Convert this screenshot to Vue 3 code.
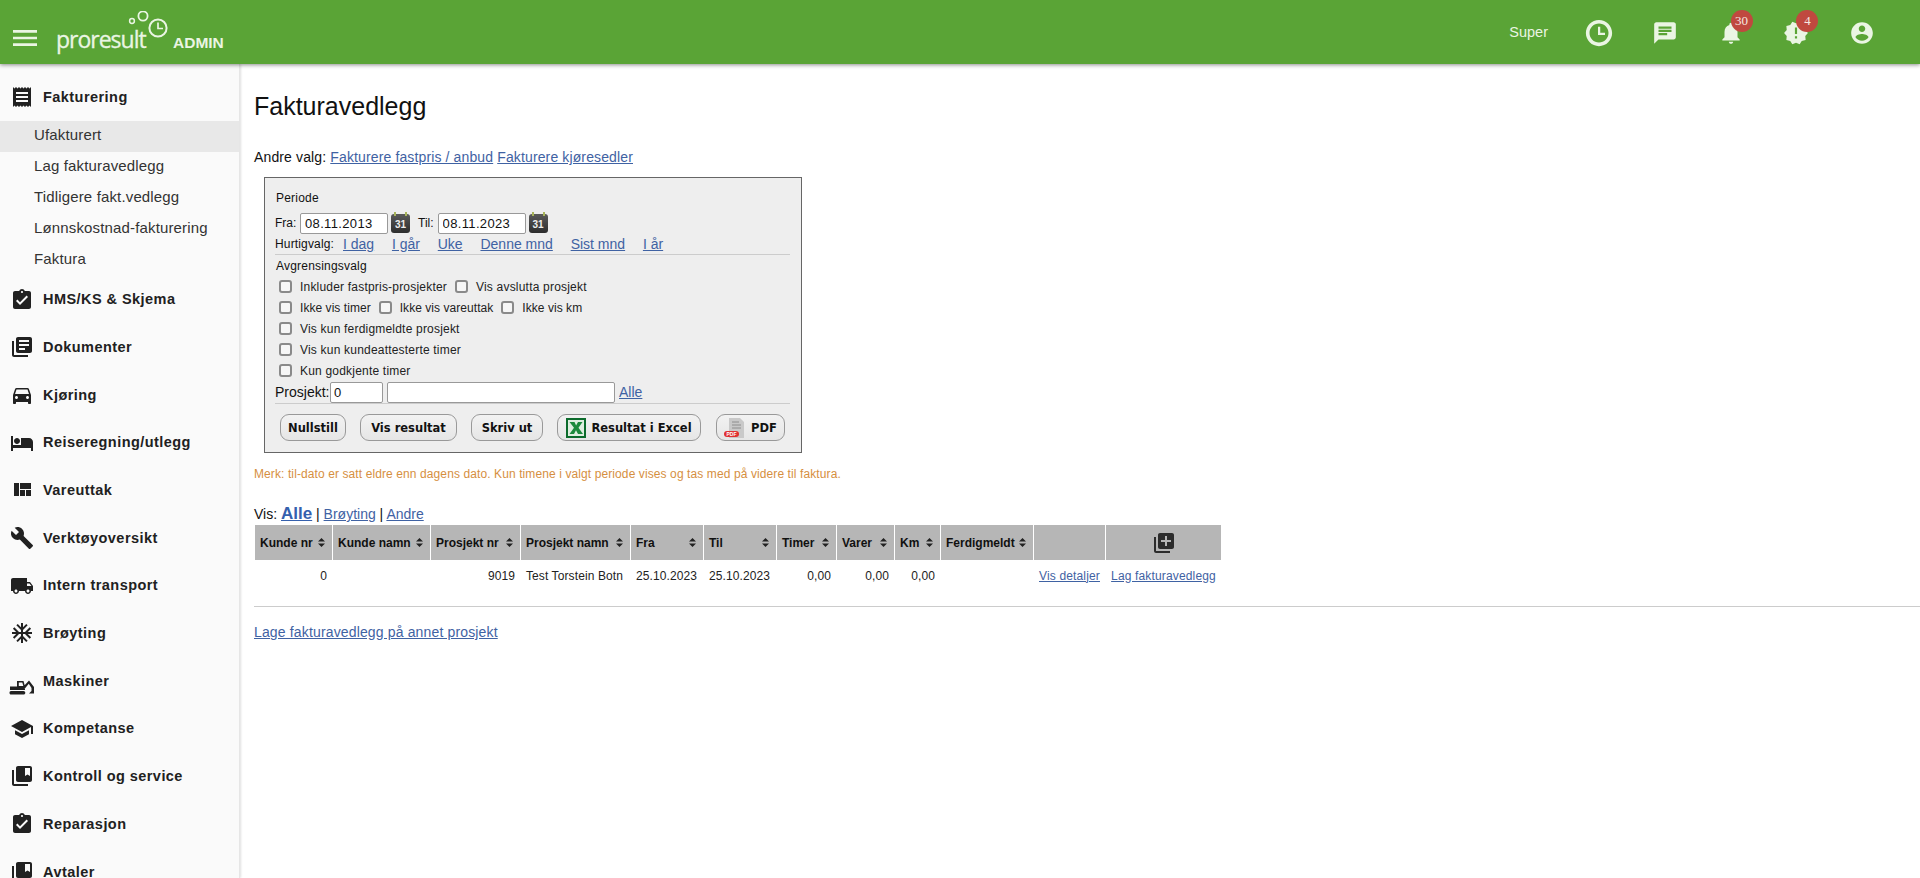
<script setup>
const P = {
  receipt: 'M18 17H6v-2h12v2zm0-4H6v-2h12v2zm0-4H6V7h12v2zM3 22l1.5-1.5L6 22l1.5-1.5L9 22l1.5-1.5L12 22l1.5-1.5L15 22l1.5-1.5L18 22l1.5-1.5L21 22V2l-1.5 1.5L18 2l-1.5 1.5L15 2l-1.5 1.5L12 2l-1.5 1.5L9 2 7.5 3.5 6 2 4.5 3.5 3 2v20z',
  turned: 'M19 3h-4.18C14.4 1.84 13.3 1 12 1c-1.3 0-2.4.84-2.82 2H5c-1.1 0-2 .9-2 2v14c0 1.1.9 2 2 2h14c1.1 0 2-.9 2-2V5c0-1.1-.9-2-2-2zm-7 0c.55 0 1 .45 1 1s-.45 1-1 1-1-.45-1-1 .45-1 1-1zm-2 14l-4-4 1.41-1.41L10 14.17l6.59-6.59L18 9l-8 8z',
  books: 'M4 6H2v14c0 1.1.9 2 2 2h14v-2H4V6zm16-4H8c-1.1 0-2 .9-2 2v12c0 1.1.9 2 2 2h12c1.1 0 2-.9 2-2V4c0-1.1-.9-2-2-2zm-1 9H9V9h10v2zm-4 4H9v-2h6v2zm4-8H9V5h10v2z',
  car: 'M18.92 6.01C18.72 5.42 18.16 5 17.5 5h-11c-.66 0-1.21.42-1.42 1.01L3 12v8c0 .55.45 1 1 1h1c.55 0 1-.45 1-1v-1h12v1c0 .55.45 1 1 1h1c.55 0 1-.45 1-1v-8l-2.08-5.99zM6.5 16c-.83 0-1.5-.67-1.5-1.5S5.67 13 6.5 13s1.5.67 1.5 1.5S7.33 16 6.5 16zm11 0c-.83 0-1.5-.67-1.5-1.5s.67-1.5 1.5-1.5 1.5.67 1.5 1.5-.67 1.5-1.5 1.5zM5 11l1.5-4.5h11L19 11H5z',
  hotel: 'M7 13c1.66 0 3-1.34 3-3S8.66 7 7 7s-3 1.34-3 3 1.34 3 3 3zm12-6h-8v7H3V5H1v15h2v-3h18v3h2v-9c0-2.21-1.79-4-4-4z',
  quilt: 'M10 18h5v-6h-5v6zm-6 0h5V5H4v13zm12 0h5v-6h-5v6zM10 5v6h11V5H10z',
  build: 'M22.7 19l-9.1-9.1c.9-2.3.4-5-1.5-6.9-2-2-5-2.4-7.4-1.3L9 6 6 9 1.6 4.7C.4 7.1.9 10.1 2.9 12.1c1.9 1.9 4.6 2.4 6.9 1.5l9.1 9.1c.4.4 1 .4 1.4 0l2.3-2.3c.5-.4.5-1.1.1-1.4z',
  truck: 'M20 8h-3V4H3c-1.1 0-2 .9-2 2v11h2c0 1.66 1.34 3 3 3s3-1.34 3-3h6c0 1.66 1.34 3 3 3s3-1.34 3-3h2v-5l-3-4zM6 18.5c-.83 0-1.5-.67-1.5-1.5s.67-1.5 1.5-1.5 1.5.67 1.5 1.5-.67 1.5-1.5 1.5zm13.5-9l1.96 2.5H17V9.5h2.5zm-1.5 9c-.83 0-1.5-.67-1.5-1.5s.67-1.5 1.5-1.5 1.5.67 1.5 1.5-.67 1.5-1.5 1.5z',
  snow: 'M22 11h-4.17l3.24-3.24-1.41-1.42L15 11h-2V9l4.66-4.66-1.42-1.41L13 6.17V2h-2v4.17L7.76 2.93 6.34 4.34 11 9v2H9L4.34 6.34 2.93 7.76 6.17 11H2v2h4.17l-3.24 3.24 1.41 1.42L9 13h2v2l-4.66 4.66 1.42 1.41L11 17.83V22h2v-4.17l3.24 3.24 1.42-1.41L13 15v-2h2l4.66 4.66 1.41-1.42L17.83 13H22z',
  digger: 'M1 22h12.5c1 0 1.8.8 1.8 1.8s-.8 1.8-1.8 1.8H1c-1 0-1.5-.8-1.5-1.8S0 22 1 22zM0 17.5h7V12h6.5l1.5 5.5V21H0zM8.8 13.5V17h4.5l-1-3.5zM13 18l6-6.5 5 6.5v6.5h-5l2.5-2.5v-3l-2.7-4.3-4.3 5.3z',
  school: 'M5 13.18v4L12 21l7-3.82v-4L12 17l-7-3.82zM12 3L1 9l11 6 9-4.91V17h2V9L12 3z',
  bookmark: 'M4 6H2v14c0 1.1.9 2 2 2h14v-2H4V6zm16-4H8c-1.1 0-2 .9-2 2v12c0 1.1.9 2 2 2h12c1.1 0 2-.9 2-2V4c0-1.1-.9-2-2-2zm0 10l-2.5-1.5L15 12V4h5v8z',
  add: 'M4 6H2v14c0 1.1.9 2 2 2h14v-2H4V6zm16-4H8c-1.1 0-2 .9-2 2v12c0 1.1.9 2 2 2h12c1.1 0 2-.9 2-2V4c0-1.1-.9-2-2-2zm-1 9h-4v4h-2v-4H9V9h4V5h2v4h4v2z',
  menu: 'M3 18h18v-2H3v2zm0-5h18v-2H3v2zm0-7v2h18V6H3z',
  clock: 'M11.99 1.5C6.2 1.5 1.5 6.2 1.5 12s4.7 10.5 10.49 10.5C17.79 22.5 22.5 17.8 22.5 12S17.79 1.5 11.99 1.5zM12 19.6c-4.2 0-7.6-3.4-7.6-7.6S7.8 4.4 12 4.4s7.6 3.4 7.6 7.6-3.4 7.6-7.6 7.6zM13 7h-1.8v6.6h5.6v-1.8H13z',
  chat: 'M20 2H4c-1.1 0-1.99.9-1.99 2L2 22l4-4h14c1.1 0 2-.9 2-2V4c0-1.1-.9-2-2-2zM6 9h12v2H6V9zm8 5H6v-2h8v2zm4-6H6V6h12v2z',
  bell: 'M12 22c1.1 0 2-.9 2-2h-4c0 1.1.89 2 2 2zm6-6v-5c0-3.07-1.64-5.64-4.5-6.32V4c0-.83-.67-1.5-1.5-1.5s-1.5.67-1.5 1.5v.68C7.63 5.36 6 7.92 6 11v5l-2 2v1h16v-1l-2-2z',
  release: 'M23 12l-2.44-2.78.34-3.68-3.61-.82-1.89-3.18L12 3 8.6 1.54 6.71 4.72l-3.61.81.34 3.68L1 12l2.44 2.78-.34 3.69 3.61.82 1.89 3.18L12 21l3.4 1.46 1.89-3.18 3.61-.82-.34-3.68L23 12zm-10 5h-2v-2h2v2zm0-4h-2V7h2v6z',
  account: 'M12 2C6.48 2 2 6.48 2 12s4.48 10 10 10 10-4.48 10-10S17.52 2 12 2zm0 3c1.66 0 3 1.34 3 3s-1.34 3-3 3-3-1.34-3-3 1.34-3 3-3zm0 14.2c-2.5 0-4.71-1.28-6-3.22.03-1.99 4-3.08 6-3.08 1.99 0 5.97 1.09 6 3.08-1.29 1.94-3.5 3.22-6 3.22z'
}
const subs = ['Ufakturert', 'Lag fakturavedlegg', 'Tidligere fakt.vedlegg', 'Lønnskostnad-fakturering', 'Faktura']
const nav = [
  ['HMS/KS & Skjema', P.turned], ['Dokumenter', P.books], ['Kjøring', P.car], ['Reiseregning/utlegg', P.hotel],
  ['Vareuttak', P.quilt], ['Verktøyoversikt', P.build], ['Intern transport', P.truck], ['Brøyting', P.snow],
  ['Maskiner', P.digger], ['Kompetanse', P.school], ['Kontroll og service', P.bookmark], ['Reparasjon', P.turned], ['Avtaler', P.bookmark]
]
const topIcons = [
  { d: P.clock, size: 30 }, { d: P.chat, size: 26 }, { d: P.bell, size: 26, badge: '30' }, { d: P.release, size: 26, badge: '4' }, { d: P.account, size: 26 }
]
const quick = ['I dag', 'I går', 'Uke', 'Denne mnd', 'Sist mnd', 'I år']
const checkRows = [
  ['Inkluder fastpris-prosjekter', 'Vis avslutta prosjekt'],
  ['Ikke vis timer', 'Ikke vis vareuttak', 'Ikke vis km'],
  ['Vis kun ferdigmeldte prosjekt'],
  ['Vis kun kundeattesterte timer'],
  ['Kun godkjente timer']
]
const cols = [
  { t: 'Kunde nr', w: 77 }, { t: 'Kunde namn', w: 97 }, { t: 'Prosjekt nr', w: 89 }, { t: 'Prosjekt namn', w: 109 },
  { t: 'Fra', w: 72 }, { t: 'Til', w: 72 }, { t: 'Timer', w: 59 }, { t: 'Varer', w: 57 }, { t: 'Km', w: 45 }, { t: 'Ferdigmeldt', w: 92 }
]
</script>

<template>
  <div class="page">
    <header class="top">
      <svg class="burger" viewBox="0 0 24 24"><path :d="P.menu" /></svg>
      <div class="logo">
        <span class="logo-word">proresult</span>
        <svg class="logo-marks" viewBox="0 0 50 34" fill="none" stroke="currentColor">
          <circle cx="5" cy="10" r="2.4" stroke-width="1.5" />
          <circle cx="16" cy="5" r="4.6" stroke-width="1.8" />
          <circle cx="31" cy="17" r="8.6" stroke-width="2" />
          <path d="M31 11.5V17.5H36" stroke-width="1.7" />
        </svg>
      </div>
      <span class="admin">ADMIN</span>
      <span class="super">Super</span>
      <div v-for="(ic, i) in topIcons" :key="i" class="top-item">
        <svg :width="ic.size" :height="ic.size" viewBox="0 0 24 24"><path :d="ic.d" /></svg>
        <span v-if="ic.badge" class="badge">{{ ic.badge }}</span>
      </div>
    </header>

    <div class="body">
      <aside class="side">
        <div class="head">
          <svg class="nav-ic" viewBox="0 0 24 24"><path :d="P.receipt" /></svg>
          <span>Fakturering</span>
        </div>
        <div v-for="(s, i) in subs" :key="s" class="sub" :class="{ active: i === 0 }">{{ s }}</div>
        <div v-for="n in nav" :key="n[0]" class="head">
          <svg class="nav-ic" viewBox="0 0 24 24"><path :d="n[1]" /></svg>
          <span>{{ n[0] }}</span>
        </div>
      </aside>

      <main class="main">
        <h1 class="title">Fakturavedlegg</h1>
        <p class="choices">Andre valg: <a href="#">Fakturere fastpris / anbud</a> <a href="#">Fakturere kjøresedler</a></p>

        <section class="panel">
          <div class="legend">Periode</div>
          <div class="dates">
            <label>Fra:</label>
            <input class="date" value="08.11.2013" />
            <span class="cal"><i></i><i></i>31</span>
            <label class="til">Til:</label>
            <input class="date" value="08.11.2023" />
            <span class="cal"><i></i><i></i>31</span>
          </div>
          <div class="quick">
            <span class="quick-label">Hurtigvalg:</span>
            <a v-for="q in quick" :key="q" href="#">{{ q }}</a>
          </div>
          <div class="legend legend2">Avgrensingsvalg</div>
          <div v-for="(r, i) in checkRows" :key="i" class="checks" :class="{ tight: i === 1 }">
            <label v-for="c in r" :key="c" class="check"><span class="box"></span>{{ c }}</label>
          </div>
          <div class="proj">
            <span class="proj-label">Prosjekt:</span>
            <input class="proj-nr" value="0" />
            <input class="proj-name" />
            <a href="#">Alle</a>
          </div>
          <div class="btns">
            <button class="b1">Nullstill</button>
            <button class="b2">Vis resultat</button>
            <button class="b3">Skriv ut</button>
            <button class="b4">
              <svg width="20" height="20" viewBox="0 0 20 20"><rect width="20" height="20" fill="#0c6b2c" /><rect x="2" y="2" width="16" height="16" fill="#dfeee0" /><path d="M3.5 4h5l1.6 3.4L12 4h4.5l-4 5.8 4.5 6.2h-5l-2-3.8-2 3.8H3.5L8 9.8z" fill="#1c8a3c" /></svg>
              Resultat i Excel
            </button>
            <button class="b5">
              <svg width="22" height="22" viewBox="0 0 22 22"><path d="M5 1h11l4 4v16H5z" fill="#c9c9c9" /><path d="M8 5h7M8 8h9M8 11h9" stroke="#8e8e8e" /><rect x="0" y="14" width="15" height="6" rx="3" fill="#e03030" /><text x="7.5" y="19" text-anchor="middle" font-size="5" font-weight="700" fill="#fff" font-family="Liberation Sans">PDF</text></svg>
              PDF
            </button>
          </div>
        </section>

        <p class="note">Merk: til-dato er satt eldre enn dagens dato. Kun timene i valgt periode vises og tas med på videre til faktura.</p>
        <p class="vis">Vis: <a href="#" class="big">Alle</a> | <a href="#">Brøyting</a> | <a href="#">Andre</a></p>

        <table class="grid">
          <colgroup>
            <col v-for="c in cols" :key="c.t" :style="{ width: c.w + 'px' }" />
            <col class="c-blank" /><col class="c-last" />
          </colgroup>
          <thead>
            <tr>
              <th v-for="c in cols" :key="c.t">
                <div class="th-in">
                  <span>{{ c.t }}</span>
                  <svg width="7" height="9" viewBox="0 0 7 9"><path d="M3.5 0L7 3.6H0zM3.5 9L0 5.4H7z" fill="#222" /></svg>
                </div>
              </th>
              <th></th>
              <th class="th-add"><svg width="24" height="24" viewBox="0 0 24 24"><path :d="P.add" fill="#2c2c2c" /></svg></th>
            </tr>
          </thead>
          <tbody>
            <tr>
              <td class="r">0</td><td></td><td class="r">9019</td><td>Test Torstein Botn</td>
              <td>25.10.2023</td><td>25.10.2023</td><td class="r">0,00</td><td class="r">0,00</td><td class="r">0,00</td><td></td>
              <td class="link-cell"><a href="#">Vis detaljer</a></td>
              <td class="link-cell"><a href="#">Lag fakturavedlegg</a></td>
            </tr>
          </tbody>
        </table>
        <hr class="rule" />
        <p class="other"><a href="#">Lage fakturavedlegg på annet prosjekt</a></p>
      </main>
    </div>
  </div>
</template>

<style>
html, body { margin: 0; height: 100%; overflow: hidden; background: #fff; }
</style>

<style scoped>
.page { width: 1920px; height: 878px; overflow: hidden; font-family: "Liberation Sans", Arial, sans-serif; color: #111; display: flex; flex-direction: column; }
a { color: #3f62a3; text-decoration: underline; }
p { margin: 0; }

.top { flex: none; height: 64px; background: #5aa436; box-shadow: 0 1px 4px rgba(0,0,0,.45); display: flex; align-items: center; position: relative; z-index: 2; color: #eaf5e3; padding-right: 25px; box-sizing: border-box; }
.burger { width: 32px; height: 32px; margin-left: 9px; fill: #eaf5e3; margin-top: 12px; }
.logo { position: relative; margin-left: 15px; width: 118px; height: 64px; }
.logo-word { position: absolute; left: 0; top: 23px; font-family: "Open Sans", sans-serif; font-size: 23px; line-height: 32px; letter-spacing: -1px; -webkit-text-stroke: .3px #eaf5e3; }
.logo-marks { position: absolute; left: 71px; top: 11px; width: 50px; height: 34px; }
.admin { font-weight: 700; font-size: 15.5px; margin-top: 22px; margin-left: -1px; }
.super { margin-left: auto; margin-right: 18px; font-size: 14.5px; margin-top: -1px; }
.top-item { width: 65.8px; height: 64px; display: flex; align-items: center; justify-content: center; position: relative; }
.top-item svg { fill: #eaf5e3; margin-top: 2px; }
.badge { position: absolute; left: 33px; top: 10px; min-width: 22px; height: 22px; border-radius: 11px; background: #c0493f; color: #f5e8e0; font-size: 13px; line-height: 22px; text-align: center; font-family: "Liberation Serif", serif; }

.body { flex: 1; display: flex; min-height: 0; }
.side { flex: none; width: 240px; box-sizing: border-box; background: #fafafa; border-right: 1px solid #e6e6e6; box-shadow: 1px 0 2px rgba(0,0,0,.12); padding-top: 9px; overflow: hidden; }
.head { height: 47.7px; display: flex; align-items: center; font-weight: 700; font-size: 14.5px; letter-spacing: .45px; color: #212121; }
.head span { padding-bottom: .5px; }
.nav-ic { width: 24px; height: 24px; margin-left: 10px; margin-right: 9px; fill: #212121; flex: none; overflow: visible; }
.sub { height: 31px; line-height: 28px; padding-left: 34px; font-size: 15px; letter-spacing: .15px; color: #333; }
.sub.active { background: #e8e8e8; }

.main { flex: 1; padding: 24px 0 0 14px; min-width: 0; }
.title { margin: 0; font-weight: 400; font-size: 25px; line-height: 36px; color: #111; }
.choices { margin-top: 23px; font-size: 14px; line-height: 20px; letter-spacing: .13px; }

.panel { margin: 10px 0 0 10px; width: 538px; height: 276px; box-sizing: border-box; background: #eee; border: 1px solid #666; padding: 9px 11px 0 10px; font-size: 12px; }
.legend { height: 20px; line-height: 22px; padding-left: 1px; letter-spacing: .2px; }
.dates { margin-top: 5px; height: 22px; display: flex; align-items: center; }
.dates label { width: 25px; }
.dates .til { width: auto; margin: 0 4px 0 8px; }
.date { width: 88px; height: 21px; box-sizing: border-box; border: 1px solid #999; border-radius: 2px; padding: 0 4px; font: 13px "Liberation Sans", sans-serif; letter-spacing: .35px; background: #fff; color: #111; }
.cal { position: relative; width: 19px; height: 19px; margin-left: 3px; margin-top: 1px; border-radius: 3px; background: linear-gradient(#5a5a5a, #2d2d2d); color: #eee; font: 700 10px/22px "Liberation Sans", sans-serif; text-align: center; }
.cal i { position: absolute; top: -2px; left: 3px; width: 2px; height: 4px; background: #a8b45a; }
.cal i + i { left: 14px; }
.quick { height: 20px; display: flex; align-items: center; border-bottom: 1px solid #ccc; }
.quick-label { width: 68px; letter-spacing: .15px; }
.quick a { font-size: 14px; margin-right: 17.8px; }
.legend2 { margin-top: 1px; line-height: 20px; }
.checks { height: 21px; display: flex; align-items: center; padding-left: 4px; letter-spacing: .2px; }
.checks.tight { letter-spacing: .05px; }
.check { display: flex; align-items: center; margin-right: 8px; color: #222; }
.box { width: 13px; height: 13px; box-sizing: border-box; border: 2px solid #8a8a8a; border-radius: 3px; background: #f6f6f6; margin-right: 8px; }
.proj { height: 22px; display: flex; align-items: center; border-bottom: 1px solid #ccc; }
.proj-label { font-size: 14px; width: 55px; }
.proj input { height: 21px; box-sizing: border-box; border: 1px solid #999; border-radius: 2px; background: #fff; font: 13px "Liberation Sans", sans-serif; padding: 0 3px; color: #111; }
.proj-nr { width: 53px; }
.proj-name { width: 228px; margin-left: 4px; }
.proj a { font-size: 14px; margin-left: 4px; }
.btns { margin-top: 10px; padding-left: 5px; display: flex; height: 27px; }
button { height: 27px; box-sizing: border-box; border: 1px solid #999; border-radius: 9px; background: linear-gradient(#f2f2f2, #e6e6e6); font: 700 11.5px "DejaVu Sans", Verdana, sans-serif; color: #111; padding: 0; display: flex; align-items: center; justify-content: center; gap: 5px; }
.b1 { width: 66px; margin-right: 14px; }
.b2 { width: 97px; margin-right: 14px; }
.b3 { width: 72px; margin-right: 14px; }
.b4 { width: 144px; margin-right: 15px; }
.b5 { width: 69px; }

.note { margin-top: 11px; line-height: 20px; font-size: 12px; letter-spacing: .1px; color: #d68f3f; }
.vis { margin-top: 19px; height: 22px; line-height: 21px; font-size: 14px; }
.big { font-size: 17px; font-weight: 700; color: #3560ad; }

.grid { border-collapse: separate; border-spacing: 1px 0; table-layout: fixed; width: 968px; font-size: 12px; }
.c-blank { width: 71px; }
.c-last { width: 115px; }
th { height: 35px; background: #b6b6b6; padding: 0 5px; text-align: left; font-weight: 700; color: #111; box-sizing: border-box; }
.th-in { display: flex; justify-content: space-between; align-items: center; padding-right: 2px; white-space: nowrap; }
.th-add { text-align: center; }
.th-add svg { display: block; margin: 0 auto; }
td { height: 31px; padding: 0 5px; color: #222; white-space: nowrap; box-sizing: border-box; letter-spacing: .1px; }
td.r { text-align: right; }
.link-cell { padding: 0 2px; text-align: center; letter-spacing: .15px; }
.rule { border: 0; border-top: 1px solid #ccc; margin: 15px 0 0 0; }
.other { margin-top: 15px; font-size: 14px; line-height: 20px; letter-spacing: .15px; }
</style>
